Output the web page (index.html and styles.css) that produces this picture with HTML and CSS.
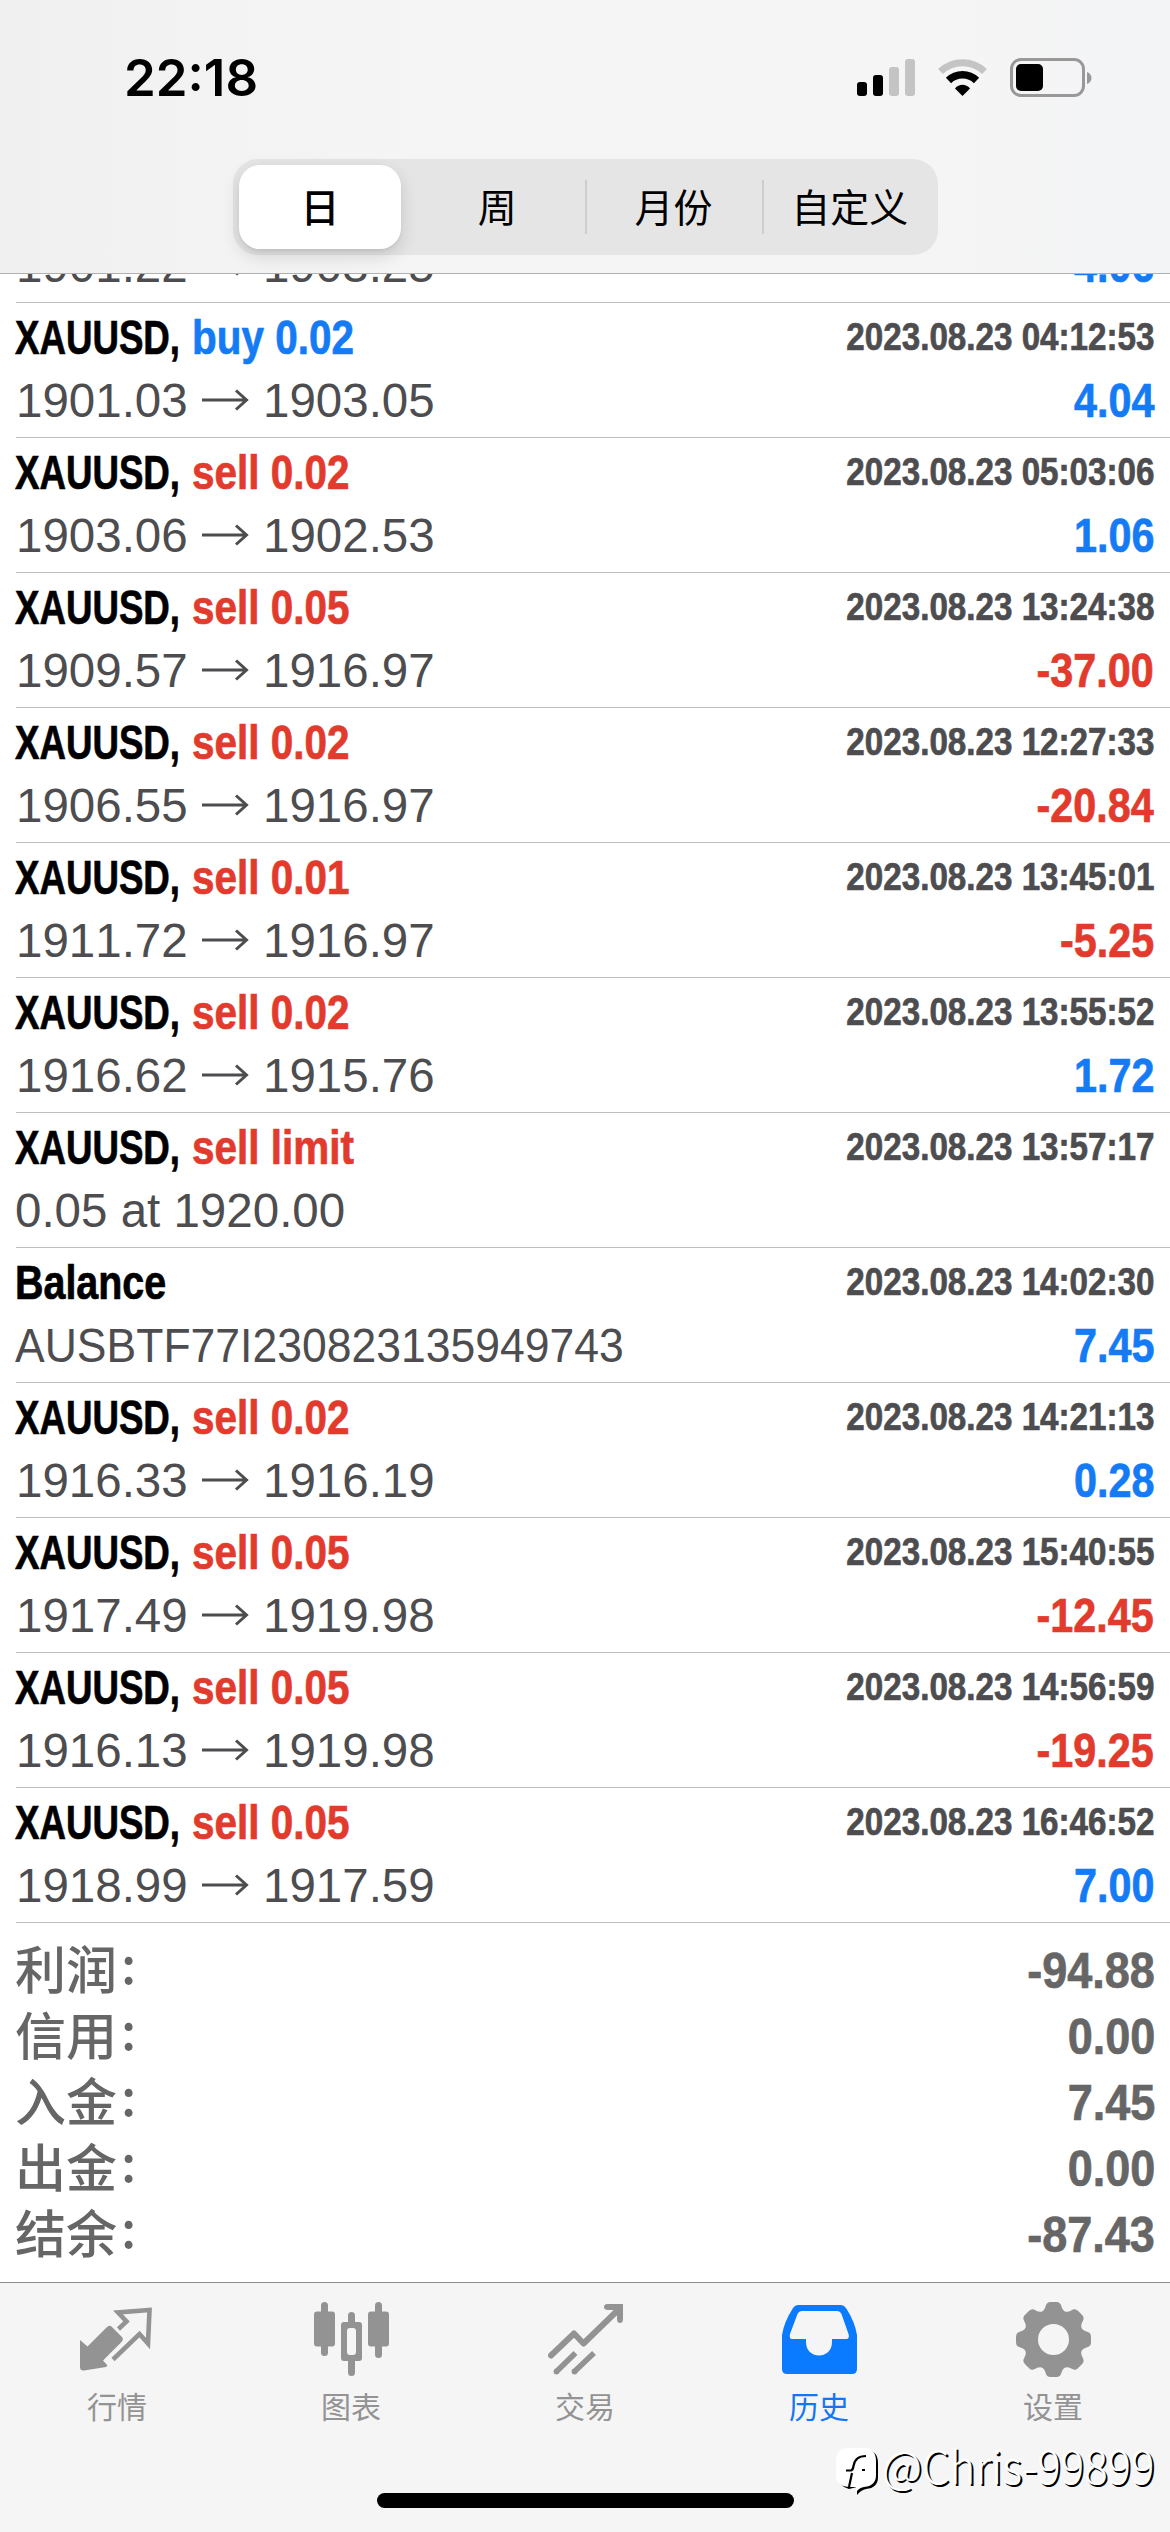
FILE: index.html
```html
<!DOCTYPE html>
<html lang="zh-CN">
<head>
<meta charset="utf-8">
<title>历史</title>
<link rel="stylesheet" href="styles.css">
</head>
<body>
<header class="header">
  <div class="status">
    <div class="time">22:18</div>
    <svg class="status-icons" width="240" height="44" viewBox="0 0 240 44">
      <rect x="1" y="26" width="10" height="14" rx="3"/>
      <rect x="17" y="19" width="10" height="21" rx="3"/>
      <rect x="33" y="11" width="10" height="29" rx="3" fill="#c4c4c4"/>
      <rect x="49" y="3" width="10" height="37" rx="3" fill="#c4c4c4"/>
      <path d="M84.500 15.500A32 32 0 0 1 128.500 15.500" fill="none" stroke="#c4c4c4" stroke-width="7"/>
      <path d="M92.500 24.500A20 20 0 0 1 120.500 24.500" fill="none" stroke="#000" stroke-width="7.500"/>
      <path d="M99 32.500C103 27.500 110 27.500 114 32.500L106.500 40Z"/>
      <rect x="155.500" y="3.500" width="72" height="36" rx="9.500" fill="none" stroke="#989898" stroke-width="3"/>
      <rect x="160" y="8" width="27" height="27" rx="5"/>
      <path d="M231 16C237 18 237 26 231 28Z" fill="#989898"/>
    </svg>
  </div>
  <nav class="segments">
    <span class="segment active">日</span>
    <span class="segment">周</span>
    <span class="segment ruled">月份</span>
    <span class="segment ruled">自定义</span>
  </nav>
</header>

<svg class="defs" width="0" height="0">
  <symbol id="arrow" viewBox="0 0 48 24"><path d="M1 12H46M35 2.500L45.500 12L35 21.500" fill="none" stroke="#4d4d50" stroke-width="3"/></symbol>
</svg>

<main class="history">
  <div class="row"><div class="line"></div><div class="line"><span class="price">1901.22</span><svg class="arrow"><use href="#arrow"/></svg><span class="price">1903.25</span><span class="profit blue">4.06</span></div></div>
  <div class="row"><div class="line"><span class="symbol">XAUUSD,</span><span class="side blue">buy 0.02</span><span class="date">2023.08.23 04:12:53</span></div><div class="line"><span class="price">1901.03</span><svg class="arrow"><use href="#arrow"/></svg><span class="price">1903.05</span><span class="profit blue">4.04</span></div></div>
  <div class="row"><div class="line"><span class="symbol">XAUUSD,</span><span class="side red">sell 0.02</span><span class="date">2023.08.23 05:03:06</span></div><div class="line"><span class="price">1903.06</span><svg class="arrow"><use href="#arrow"/></svg><span class="price">1902.53</span><span class="profit blue">1.06</span></div></div>
  <div class="row"><div class="line"><span class="symbol">XAUUSD,</span><span class="side red">sell 0.05</span><span class="date">2023.08.23 13:24:38</span></div><div class="line"><span class="price">1909.57</span><svg class="arrow"><use href="#arrow"/></svg><span class="price">1916.97</span><span class="profit red">-37.00</span></div></div>
  <div class="row"><div class="line"><span class="symbol">XAUUSD,</span><span class="side red">sell 0.02</span><span class="date">2023.08.23 12:27:33</span></div><div class="line"><span class="price">1906.55</span><svg class="arrow"><use href="#arrow"/></svg><span class="price">1916.97</span><span class="profit red">-20.84</span></div></div>
  <div class="row"><div class="line"><span class="symbol">XAUUSD,</span><span class="side red">sell 0.01</span><span class="date">2023.08.23 13:45:01</span></div><div class="line"><span class="price">1911.72</span><svg class="arrow"><use href="#arrow"/></svg><span class="price">1916.97</span><span class="profit red">-5.25</span></div></div>
  <div class="row"><div class="line"><span class="symbol">XAUUSD,</span><span class="side red">sell 0.02</span><span class="date">2023.08.23 13:55:52</span></div><div class="line"><span class="price">1916.62</span><svg class="arrow"><use href="#arrow"/></svg><span class="price">1915.76</span><span class="profit blue">1.72</span></div></div>
  <div class="row"><div class="line"><span class="symbol">XAUUSD,</span><span class="side red">sell limit</span><span class="date">2023.08.23 13:57:17</span></div><div class="line"><span class="note">0.05 at 1920.00</span></div></div>
  <div class="row"><div class="line"><span class="symbol balance">Balance</span><span class="date">2023.08.23 14:02:30</span></div><div class="line"><span class="note account">AUSBTF77I230823135949743</span><span class="profit blue">7.45</span></div></div>
  <div class="row"><div class="line"><span class="symbol">XAUUSD,</span><span class="side red">sell 0.02</span><span class="date">2023.08.23 14:21:13</span></div><div class="line"><span class="price">1916.33</span><svg class="arrow"><use href="#arrow"/></svg><span class="price">1916.19</span><span class="profit blue">0.28</span></div></div>
  <div class="row"><div class="line"><span class="symbol">XAUUSD,</span><span class="side red">sell 0.05</span><span class="date">2023.08.23 15:40:55</span></div><div class="line"><span class="price">1917.49</span><svg class="arrow"><use href="#arrow"/></svg><span class="price">1919.98</span><span class="profit red">-12.45</span></div></div>
  <div class="row"><div class="line"><span class="symbol">XAUUSD,</span><span class="side red">sell 0.05</span><span class="date">2023.08.23 14:56:59</span></div><div class="line"><span class="price">1916.13</span><svg class="arrow"><use href="#arrow"/></svg><span class="price">1919.98</span><span class="profit red">-19.25</span></div></div>
  <div class="row"><div class="line"><span class="symbol">XAUUSD,</span><span class="side red">sell 0.05</span><span class="date">2023.08.23 16:46:52</span></div><div class="line"><span class="price">1918.99</span><svg class="arrow"><use href="#arrow"/></svg><span class="price">1917.59</span><span class="profit blue">7.00</span></div></div>
  <section class="summary">
    <div class="total"><span>利润<i>:</i></span><b>-94.88</b></div>
    <div class="total"><span>信用<i>:</i></span><b>0.00</b></div>
    <div class="total"><span>入金<i>:</i></span><b>7.45</b></div>
    <div class="total"><span>出金<i>:</i></span><b>0.00</b></div>
    <div class="total"><span>结余<i>:</i></span><b>-87.43</b></div>
  </section>
</main>

<footer class="footer">
  <nav class="tabs">
    <a class="tab">
      <svg width="75" height="75" viewBox="0 0 75 75"><path d="M0 38L7.500 44.500L26.500 25.500Q29.500 22.500 32 25L42 35Q44 37.500 41.500 40L23 58.500L27.500 63.500L26 65L4 68.500Q0 69 0 65Z" fill="#939393"/><path d="M38.500 27L46.500 19.500L38 10.500L69.500 8L68 41.500L59.500 32L33 57.500" fill="none" stroke="#939393" stroke-width="4.600"/></svg>
      <span>行情</span></a>
    <a class="tab">
      <svg width="75" height="75" viewBox="0 0 75 75" fill="#939393"><rect x="0" y="9.500" width="21" height="35" rx="3"/><rect x="7" y="0" width="7" height="54" rx="3.500"/><rect x="54" y="9.500" width="21" height="35" rx="3"/><rect x="61" y="0" width="7" height="56" rx="3.500"/><path fill-rule="evenodd" d="M30 20H45Q48 20 48 23V56Q48 59 45 59H30Q27 59 27 56V23Q27 20 30 20ZM36 26Q33 26 33 29V50Q33 53 36 53H39Q42 53 42 50V29Q42 26 39 26Z"/><path d="M34 22V13.500Q34 10 37.500 10T41 13.500V22ZM34 57V70.500Q34 74 37.500 74T41 70.500V57Z"/></svg>
      <span>图表</span></a>
    <a class="tab">
      <svg width="75" height="75" viewBox="0 0 75 75"><path d="M3 53.500L26 31.500L35.500 41.500L69 9" fill="none" stroke="#939393" stroke-width="6" stroke-linecap="round" stroke-linejoin="round"/><path d="M59.500 2H75V17Q75 21 72 21T69 17V8H60Q56 8 56 5T59.500 2Z" fill="#939393"/><path d="M8.500 69.500L27.500 51M26.500 69.500L46 51" fill="none" stroke="#939393" stroke-width="5.600"/><circle cx="8.500" cy="69.500" r="2.900" fill="#939393"/><circle cx="26.500" cy="69.500" r="2.900" fill="#939393"/></svg>
      <span>交易</span></a>
    <a class="tab selected">
      <svg width="75" height="75" viewBox="0 0 75 75"><path fill="#0a7aff" fill-rule="evenodd" d="M16 3H59Q62 3 64 6Q73 20 75 33V67Q75 72 70 72H5Q0 72 0 67V33Q2 20 11 6Q13 3 16 3ZM20 9Q17 9 15.500 12L8 32Q7 37 10 37H24V40C24 58 50 58 50 40V37H64Q68 37 66.500 32L59.500 12Q58 9 55 9Z"/></svg>
      <span>历史</span></a>
    <a class="tab">
      <svg width="75" height="75" viewBox="-37.500 -37.500 75 75"><g fill="#939393"><circle r="29"/><g id="teeth"><path id="tooth" d="M-13 -27Q-9 -29 -8 -33Q-7 -37.500 -3 -37.500H3Q7 -37.500 8 -33Q9 -29 13 -27V-20H-13Z"/><use href="#tooth" transform="rotate(45)"/><use href="#tooth" transform="rotate(90)"/><use href="#tooth" transform="rotate(135)"/></g><use href="#teeth" transform="rotate(180)"/></g><circle r="15.500" fill="#f5f5f5"/></svg>
      <span>设置</span></a>
  </nav>
  <div class="home"></div>
  <div class="watermark">
    <svg width="44" height="50" viewBox="0 0 44 50"><path d="M15 2H29Q42 2 42 15V29Q42 40 30 41Q25 42 21 47L21 39L13 41Q2 38 2 28V15Q2 2 15 2Z" fill="#000"/><path d="M13 0H27Q40 0 40 13V27Q40 38 28 39Q22 40 20 45L20 39H13Q0 38 0 27V13Q0 0 13 0Z" fill="#fff"/><path d="M13 39L16 25M10 22.500H15Q17 22 17.500 18Q19 8 30 8M26 22H29" fill="none" stroke="#000" stroke-width="2.200"/></svg>
    <span>@Chris-99899</span>
  </div>
</footer>
</body>
</html>
```
FILE: styles.css
```css
* { box-sizing: border-box; }
body {
  margin: 0;
  width: 1170px;
  height: 2532px;
  overflow: hidden;
  display: flex;
  flex-direction: column;
  background: #fff;
  color: #4d4d50;
  font-family: "Liberation Sans", "Noto Sans CJK SC", sans-serif;
  font-kerning: none;
}
.defs { position: absolute; }
.header {
  height: 274px;
  flex: none;
  background: linear-gradient(90deg, #f0f0f0, #f5f5f5 35%, #f5f5f5 80%, #f3f4f6);
  border-bottom: 1px solid #b0b0b0;
  display: flex;
  flex-direction: column;
}
.status {
  height: 159px;
  padding: 47px 74px 0 124px;
  display: flex;
  justify-content: space-between;
}
.status-icons { margin-top: 9px; }
.time {
  font: 600 51px/62px Inter, sans-serif;
  color: #000;
}
.segments {
  width: 705px;
  height: 96px;
  margin-left: 233px;
  padding: 6px 0 6px 6px;
  display: flex;
  align-items: center;
  border-radius: 25px;
  background: #e5e5e6;
  color: #000;
  font: 400 39px/80px "Noto Sans CJK SC", sans-serif;
}
.segment { width: 178px; height: 84px; text-align: center; }
.segment.active {
  width: 162px;
  margin-right: 8px;
  flex: none;
  border-radius: 21px;
  background: #fff;
  font-weight: 500;
  box-shadow: 0 7px 18px rgba(0, 0, 0, .14), 0 2px 3px rgba(0, 0, 0, .05);
}
.segment.ruled {
  background: linear-gradient(#cdcdd0, #cdcdd0) 0 50% / 2px 54px no-repeat;
}
.history {
  height: 2008px;
  flex: none;
  overflow: hidden;
}
.row {
  height: 135px;
  margin-left: 16px;
  padding: 8px 16px 0 0;
  border-bottom: 1px solid #bdbdbf;
}
.row:first-child { margin-top: -106px; }
.line {
  display: flex;
  height: 54px;
  margin-bottom: 9px;
  font-size: 47.500px;
  line-height: 54px;
  white-space: nowrap;
}
.symbol, .side, .date, .profit { font-weight: 700; -webkit-text-stroke: .7px currentColor; }
.symbol {
  width: 177px;
  margin-left: -1px;
  color: #000;
  transform: scaleX(.772);
  transform-origin: left;
}
.symbol.balance { transform: scaleX(.83); }
.side { transform: scaleX(.852); transform-origin: left; }
.date {
  margin-left: auto;
  font-size: 38.500px;
  line-height: 52px;
  transform: scaleX(.862);
  transform-origin: right;
}
.profit { margin-left: auto; transform: scaleX(.87); transform-origin: right; }
.price { width: 172px; }
.arrow { width: 48px; height: 24px; margin: 14px 27px 0 13px; }
.arrow + .price { margin-left: -13px; }
.note { margin-left: -1px; }
.note.account { transform: scaleX(.937); transform-origin: left; }
.blue { color: #157bf5; }
.red { color: #e23b2e; }
.summary { padding: 15px 15px 0; color: #666; }
.total {
  display: flex;
  justify-content: space-between;
  height: 66px;
  line-height: 66px;
}
.total span { font: 500 51px/66px "Noto Sans CJK SC", sans-serif; margin-top: -4px; }
.total i { position: relative; top: -5px; font-style: normal; margin-left: 4px; }
.total b { font-size: 50px; transform: scaleX(.9); transform-origin: right; -webkit-text-stroke: .7px currentColor; }
.footer {
  position: relative;
  flex: 1;
  background: #f5f5f5;
  border-top: 1px solid #8c8c8f;
}
.tabs { display: flex; padding-top: 19px; }
.tab {
  width: 234px;
  display: flex;
  flex-direction: column;
  align-items: center;
  color: #939393;
  font: 400 30px/44px "Noto Sans CJK SC", sans-serif;
}
.tab span { margin-top: 6px; }
.tab.selected { color: #1476f6; }
.home {
  width: 417px;
  height: 15px;
  margin: 66px auto 0;
  border-radius: 8px;
  background: #000;
}
.watermark {
  position: absolute;
  left: 836px;
  top: 165px;
  display: flex;
  color: #fff;
  font: 300 45px/46px "Noto Sans CJK SC", sans-serif;
  text-shadow: 2px 2px 0 #000;
}
.watermark span {
  margin: -6px 0 0 2px;
  white-space: nowrap;
  transform: scaleX(.975);
  transform-origin: left;
}
```
